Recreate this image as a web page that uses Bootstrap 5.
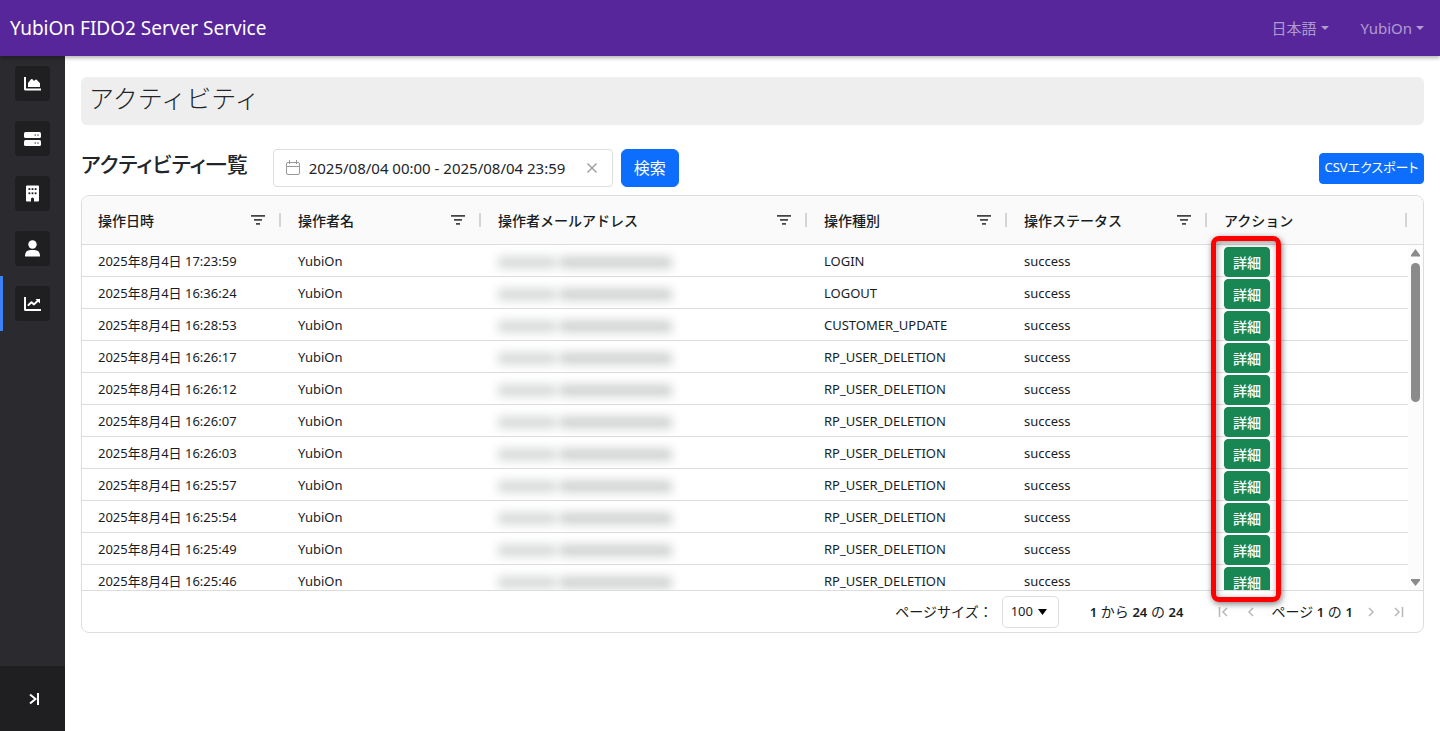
<!DOCTYPE html>
<html lang="ja">
<head>
<meta charset="utf-8">
<meta name="viewport" content="width=device-width, initial-scale=1">
<title>YubiOn FIDO2 Server Service</title>
<link rel="stylesheet" href="https://cdn.jsdelivr.net/npm/bootstrap@5.3.0/dist/css/bootstrap.min.css">
<style>
  body { font-family: "Noto Sans", "Noto Sans CJK JP", sans-serif; color: #212529; }
  .topbar { height: 56px; background: #56269a; box-shadow: 0 2px 4px rgba(0,0,0,.3); z-index: 2; padding: 1px 16px 0 10px; }
  .brand-link { color: #fff; font-size: 19px; text-decoration: none; }
  .topbar .nav-link { color: rgba(255,255,255,.55); font-size: 15px; padding: 0; }
  .topbar .nav-link.dropdown-toggle::after { margin-left: 4px; }
  .sidebar { width: 65px; background: #2b2a2f; }
  .side-item { height: 55px; }
  .side-item.active { box-shadow: inset 3px 0 #3b82f6; }
  .side-icon { width: 35px; height: 35px; background: #1f1f21; border-radius: 4px; color: #fff; }
  .side-toggle { height: 65px; background: #1f1f21; color: #fff; border: 0; padding: 0 0 0 4px; }
  main { padding: 21px 16px; min-width: 0; }
  .page-title { background: #eee; border-radius: 6px; height: 48px; padding: 0 8px; font-size: 25px; font-weight: 300; line-height: 43px; margin: 0 0 24px; }
  .list-title { font-size: 21px; font-weight: 500; line-height: 30px; margin: 0 25px 8px 0; font-feature-settings: "palt"; }
  .date-box { width: 340px; height: 38px; border: 1px solid #ddd; border-radius: 4px; padding: 0 12px 0 11px; color: #999; }
  .date-box input { border: 0; outline: 0; padding: 0; width: 277px; font-size: 15px; color: #212529; background: none; }
  .search-btn { width: 58px; height: 38px; font-size: 16px; padding: 0; }
  .csv-btn { min-width: 105px; height: 31px; font-size: 13px; padding: 0 4px; white-space: nowrap; font-feature-settings: "palt"; }
  .grid-card { border: 1px solid #dddddd; border-radius: 8px; margin-top: 8px; font-size: 13px; color: #181d1f; }
  .grid-view { height: 395px; overflow: hidden; border-bottom: 1px solid #dddddd; border-radius: 7px 7px 0 0; }
  .grid-table { table-layout: fixed; width: 100%; border-collapse: separate; border-spacing: 0; }
  .grid-table th { height: 49px; padding: 0 0 0 16px; background: #fafafa; border-bottom: 1px solid #dddddd; font-size: 14px; font-weight: 500; }
  .grid-table td { height: 32px; padding: 2px 16px 0; border-bottom: 1px solid #dddddd; line-height: 29px; white-space: nowrap; }
  .w-std { width: 200px; }
  .w-mail { width: 326px; }
  .sep { width: 2px; height: 14px; background: #d4d4d4; margin-left: 14px; }
  .th-in { padding-right: 1px; }
  .th-last { padding-right: 16px; }
  .detail-btn { display: block; width: 46px; height: 30px; margin: 0 0 -1px; padding: 0; font-size: 14px; font-weight: 500; line-height: 29px; }
  .masked { display: flex; gap: 4px; width: 174px; padding-top: 2px; filter: blur(5px); }
  .masked i { height: 13px; background: #d3d5d5; }
  .masked i:first-child { width: 58px; background: #dadcdc; }
  .masked i:last-child { flex: 1; }
  .scrollbar-y { top: 49px; right: 0; width: 15px; height: 345px; background: #fcfcfc; color: #8b8b8b; padding: 4px 0; }
  .scroll-thumb { width: 9px; height: 139px; border-radius: 5px; background: #8b8b8b; margin: 6px 0 auto; }
  .callout { left: 1129px; top: 40px; width: 70px; height: 366px; border: 5px solid #f00; border-radius: 8px; box-shadow: 1px 2px 6px rgba(0,0,0,.5), inset 1px 2px 6px rgba(0,0,0,.4); pointer-events: none; }
  .pager { height: 41px; padding-right: 17px; font-size: 14px; }
  .pager b { font-size: 13px; font-weight: 600; }
  .size-box { width: 57px; height: 32px; margin: 0 31px 0 9px; }
  .size-box select { appearance: none; width: 100%; height: 100%; border: 1px solid #ddd; border-radius: 5px; background: #fff; padding: 0 8px; font-size: 13px; color: #181d1f; }
  .size-caret { right: 12px; top: 13px; pointer-events: none; }
  .page-btn { border: 0; background: none; padding: 0; width: 14px; height: 16px; margin-left: 14px; color: #b7b8b9; line-height: 0; }
  .first-btn { margin-left: 33px; }
  .page-no { margin-left: 13px; margin-right: -3px; }
  svg { display: block; }
</style>
</head>
<body class="d-flex flex-column min-vh-100">
<header class="topbar d-flex align-items-center position-relative">
  <a class="brand-link me-auto" href="#">YubiOn FIDO2 Server Service</a>
  <nav class="d-flex gap-4">
    <a class="nav-link dropdown-toggle me-2" href="#">日本語</a>
    <a class="nav-link dropdown-toggle" href="#">YubiOn</a>
  </nav>
</header>
<div class="d-flex flex-grow-1">
  <nav class="sidebar d-flex flex-column flex-shrink-0" aria-label="メニュー">
    <a class="side-item d-flex align-items-center justify-content-center" href="#"><span class="side-icon d-flex align-items-center justify-content-center">
      <svg width="17" height="17" viewBox="0 0 17 17" fill="currentColor"><path d="M0 2h2v11.500h15v2H1.500Q0 15.500 0 14z"/><path d="M4 12V8L7 4.300Q7.700 3.600 8.500 4.300L10 6l1.400-1.200q.8-.6 1.500.1L16 8.300V12z"/></svg></span></a>
    <a class="side-item d-flex align-items-center justify-content-center" href="#"><span class="side-icon d-flex align-items-center justify-content-center">
      <svg width="17" height="17" viewBox="0 0 17 17"><g fill="#fff"><rect y="2" width="17" height="6" rx="1.500"/><rect y="10" width="17" height="6" rx="1.500"/></g><g fill="#777"><rect x="10.500" y="4.300" width="1.500" height="1.500"/><rect x="13.200" y="4.300" width="1.500" height="1.500"/><rect x="10.500" y="12.300" width="1.500" height="1.500"/><rect x="13.200" y="12.300" width="1.500" height="1.500"/></g></svg></span></a>
    <a class="side-item d-flex align-items-center justify-content-center" href="#"><span class="side-icon d-flex align-items-center justify-content-center">
      <svg width="17" height="17" viewBox="0 0 17 17"><path fill="#fff" d="M3 .5h11q1 0 1 1v14q0 1-1 1H10V14a1.500 1.500 0 0 0-3 0v2.500H3q-1 0-1-1v-14q0-1 1-1z"/><g fill="#1f1f21"><rect x="4.500" y="3.200" width="1.800" height="1.800"/><rect x="7.600" y="3.200" width="1.800" height="1.800"/><rect x="10.700" y="3.200" width="1.800" height="1.800"/><rect x="4.500" y="7.400" width="1.800" height="1.800"/><rect x="7.600" y="7.400" width="1.800" height="1.800"/><rect x="10.700" y="7.400" width="1.800" height="1.800"/></g></svg></span></a>
    <a class="side-item d-flex align-items-center justify-content-center" href="#"><span class="side-icon d-flex align-items-center justify-content-center">
      <svg width="17" height="17" viewBox="0 0 17 17" fill="currentColor"><circle cx="8.500" cy="4.500" r="4.200"/><path d="M1 16q0-6 5.500-6h4q5.500 0 5.500 6 0 .5-.7.500H1.700Q1 16.500 1 16z"/></svg></span></a>
    <a class="side-item active d-flex align-items-center justify-content-center" href="#"><span class="side-icon d-flex align-items-center justify-content-center">
      <svg width="17" height="17" viewBox="0 0 17 17"><path fill="#fff" d="M0 2h2V14h15v2H1.500Q0 16 0 14.500z"/><path fill="none" stroke="#fff" stroke-width="2" stroke-linejoin="round" stroke-linecap="round" d="M4.500 10L7.500 7.200l2.500 2.200L14 5.500"/><path fill="#fff" d="M11.500 4H16v4.500z"/></svg></span></a>
    <button class="side-toggle mt-auto d-flex align-items-center justify-content-center" type="button" aria-label="開く">
      <svg width="12" height="12" viewBox="0 0 12 12" fill="none" stroke="currentColor" stroke-width="2"><path d="M1 1.500L6.500 6 1 10.500M9 0v12"/></svg>
    </button>
  </nav>
  <main class="flex-grow-1">
    <h1 class="page-title">アクティビティ</h1>
    <div class="d-flex align-items-center">
      <h2 class="list-title">アクティビティ一覧</h2>
      <label class="date-box d-flex align-items-center me-2">
        <svg class="me-2" width="16" height="16" viewBox="0 0 16 16" fill="none" stroke="currentColor"><rect x="1.500" y="2.500" width="13" height="12" rx="1.500"/><path d="M1.500 6.500h13M4.500 0v4M11.500 0v4"/></svg>
        <input type="text" value="2025/08/04 00:00 - 2025/08/04 23:59" aria-label="期間">
        <svg width="12" height="12" viewBox="0 0 12 12" fill="none" stroke="currentColor" stroke-width="1.300"><path d="M1.500 1.500l9 9M10.500 1.500l-9 9"/></svg>
      </label>
      <button class="btn btn-primary search-btn" type="button">検索</button>
      <button class="btn btn-primary btn-sm csv-btn ms-auto" type="button">CSVエクスポート</button>
    </div>
    <section class="grid-card position-relative">
      <div class="grid-view">
        <table class="grid-table">
          <colgroup><col class="w-std"><col class="w-std"><col class="w-mail"><col class="w-std"><col class="w-std"><col></colgroup>
          <thead><tr id="head"></tr></thead>
          <tbody id="rows"></tbody>
        </table>
      </div>
      <div class="scrollbar-y position-absolute d-flex flex-column align-items-center" aria-hidden="true">
        <svg width="9" height="8" viewBox="0 0 9 8" fill="currentColor"><path d="M4.500 0L9 6v1.500H0V6z"/></svg>
        <div class="scroll-thumb"></div>
        <svg width="9" height="8" viewBox="0 0 9 8" fill="currentColor"><path d="M4.500 8L0 2.500V1h9v1.500z"/></svg>
      </div>
      <div class="callout position-absolute"></div>
      <div class="pager d-flex align-items-center justify-content-end">
        <label for="size">ページサイズ：</label>
        <div class="size-box position-relative">
          <select id="size"><option>100</option></select>
          <svg class="size-caret position-absolute" width="9" height="6" viewBox="0 0 9 6"><path d="M0 0h9L4.500 6z"/></svg>
        </div>
        <span><b>1</b> から <b>24</b> の <b>24</b></span>
        <button class="page-btn first-btn" type="button" aria-label="最初"><svg width="14" height="16" viewBox="0 0 14 16" fill="none" stroke="currentColor" stroke-width="1.500"><path d="M3.500 3v10M11 4L7 8l4 4"/></svg></button>
        <button class="page-btn" type="button" aria-label="前"><svg width="14" height="16" viewBox="0 0 14 16" fill="none" stroke="currentColor" stroke-width="1.500"><path d="M9 4L5 8l4 4"/></svg></button>
        <span class="page-no">ページ <b>1</b> の <b>1</b></span>
        <button class="page-btn" type="button" aria-label="次"><svg width="14" height="16" viewBox="0 0 14 16" fill="none" stroke="currentColor" stroke-width="1.500"><path d="M5 4l4 4-4 4"/></svg></button>
        <button class="page-btn" type="button" aria-label="最後"><svg width="14" height="16" viewBox="0 0 14 16" fill="none" stroke="currentColor" stroke-width="1.500"><path d="M3 4l4 4-4 4M10.500 3v10"/></svg></button>
      </div>
    </section>
  </main>
</div>
<script src="https://cdn.jsdelivr.net/npm/bootstrap@5.3.0/dist/js/bootstrap.bundle.min.js"></script>
<script>
  const filterIcon = '<svg class="ms-auto" width="14" height="12" viewBox="0 0 14 12" fill="#444"><path d="M0 1h14v1.800H0zM3 5h8v1.800H3zM5 9h4v1.800H5z"/></svg>';
  const heads = ['操作日時', '操作者名', '操作者メールアドレス', '操作種別', '操作ステータス', 'アクション'];
  document.getElementById('head').innerHTML = heads.map((h, i) => {
    const last = i === heads.length - 1;
    return `<th scope="col"><div class="d-flex align-items-center ${last ? 'th-last' : 'th-in'}">${h}${last ? '' : filterIcon}<span class="sep${last ? ' ms-auto' : ''}"></span></div></th>`;
  }).join('');
  const log = [
    ['17:23:59', 'LOGIN'], ['16:36:24', 'LOGOUT'], ['16:28:53', 'CUSTOMER_UPDATE'],
    ...['16:26:17', '16:26:12', '16:26:07', '16:26:03', '16:25:57', '16:25:54', '16:25:49', '16:25:46'].map(t => [t, 'RP_USER_DELETION'])
  ];
  document.getElementById('rows').innerHTML = log.map(([t, kind]) =>
    `<tr><td>2025年8月4日 ${t}</td><td>YubiOn</td><td><span class="masked"><i></i><i></i></span></td><td>${kind}</td><td>success</td><td><button class="btn btn-success btn-sm detail-btn" type="button">詳細</button></td></tr>`).join('');
</script>
</body>
</html>
